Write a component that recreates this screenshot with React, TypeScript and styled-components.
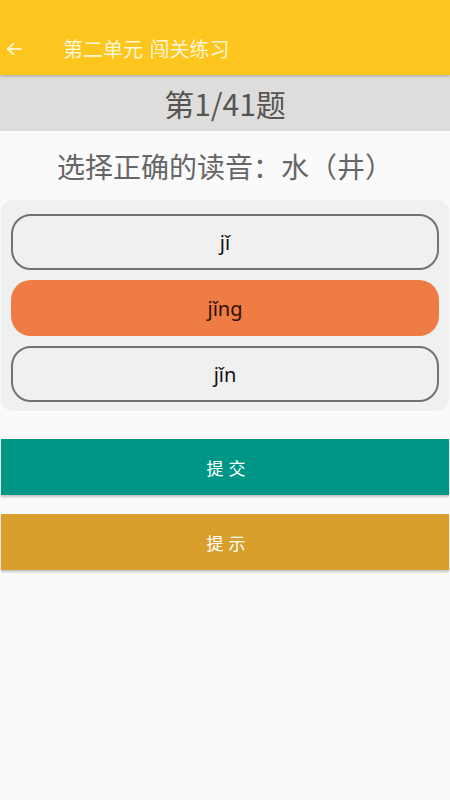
import React, { useState } from "react";
import styled, { createGlobalStyle } from "styled-components";

const Global = createGlobalStyle`
  html, body { margin: 0; padding: 0; background: #fafafa; }
  body { font-family: "Noto Sans", "Noto Sans CJK SC", sans-serif; }
  * { box-sizing: border-box; }
`;

const Page = styled.div`
  width: 450px;
  min-height: 800px;
  background: #fafafa;
  display: flex;
  flex-direction: column;
`;

const AppBar = styled.header`
  height: 75px;
  background: #fdc61e;
  display: flex;
  align-items: flex-end;
  padding-bottom: 12px;
  box-shadow: 0 1px 3px rgba(0, 0, 0, 0.25);
  position: relative;
  z-index: 1;
`;

const BackButton = styled.button`
  width: 28px;
  height: 28px;
  margin-left: 0;
  padding: 0;
  border: none;
  background: transparent;
  display: flex;
  align-items: center;
  justify-content: center;
`;

const Title = styled.h1`
  margin: 0 0 0 35px;
  font-size: 20px;
  font-weight: 400;
  color: #fff6d6;
  line-height: 28px;
  word-spacing: 2px;
  font-family: "Noto Sans CJK SC", sans-serif;
`;

const Counter = styled.div`
  height: 56px;
  background: #dedddc;
  display: flex;
  align-items: center;
  justify-content: center;
  font-size: 30px;
  color: #555;
  font-family: "Noto Sans CJK SC", sans-serif;
`;

const Question = styled.div`
  height: 69px;
  display: flex;
  align-items: center;
  justify-content: center;
  font-size: 28px;
  color: #666;
  font-family: "Noto Sans CJK SC", sans-serif;
`;

const OptionPanel = styled.div`
  margin: 0 1px;
  background: #f0f0f0;
  border-radius: 12px;
  padding: 14px 10px 9px;
  display: flex;
  flex-direction: column;
  gap: 10px;
`;

const Option = styled.button<{ $selected: boolean }>`
  height: 56px;
  border-radius: 20px;
  border: ${(p) => (p.$selected ? "none" : "2px solid #727272")};
  background: ${(p) => (p.$selected ? "#ef7b45" : "#f0f0f0")};
  color: ${(p) => (p.$selected ? "#2a1208" : "#111")};
  font-family: "Noto Sans", "DejaVu Sans", sans-serif;
  font-size: 20px;
  display: flex;
  align-items: center;
  justify-content: center;
  padding: 0;
  cursor: pointer;
`;

const ActionButton = styled.button<{ $color: string }>`
  margin: 0 1px;
  height: 56px;
  border: none;
  background: ${(p) => p.$color};
  color: #fff;
  font-size: 17px;
  letter-spacing: 5px;
  padding-left: 13px;
  font-family: "Noto Sans CJK SC", sans-serif;
  box-shadow: 0 2px 2px rgba(0, 0, 0, 0.22);
  cursor: pointer;
`;

const Actions = styled.div`
  margin-top: 28px;
  display: flex;
  flex-direction: column;
  gap: 19px;
`;

export default function App() {
  const [selected, setSelected] = useState(1);
  const options = ["jǐ", "jǐng", "jǐn"];
  return (
    <Page>
      <Global />
      <AppBar>
        <BackButton aria-label="back">
          <svg width="18" height="18" viewBox="0 0 24 24" fill="none" stroke="#fff6d6" strokeWidth="2.4" strokeLinecap="square">
            <path d="M21 12H4" />
            <path d="M11 5l-7 7 7 7" />
          </svg>
        </BackButton>
        <Title>第二单元 闯关练习</Title>
      </AppBar>
      <Counter>第1/41题</Counter>
      <Question>选择正确的读音：水（井）</Question>
      <OptionPanel>
        {options.map((o, i) => (
          <Option key={o} $selected={selected === i} onClick={() => setSelected(i)}>
            {o}
          </Option>
        ))}
      </OptionPanel>
      <Actions>
        <ActionButton $color="#009686">提交</ActionButton>
        <ActionButton $color="#d99f2c">提示</ActionButton>
      </Actions>
    </Page>
  );
}
